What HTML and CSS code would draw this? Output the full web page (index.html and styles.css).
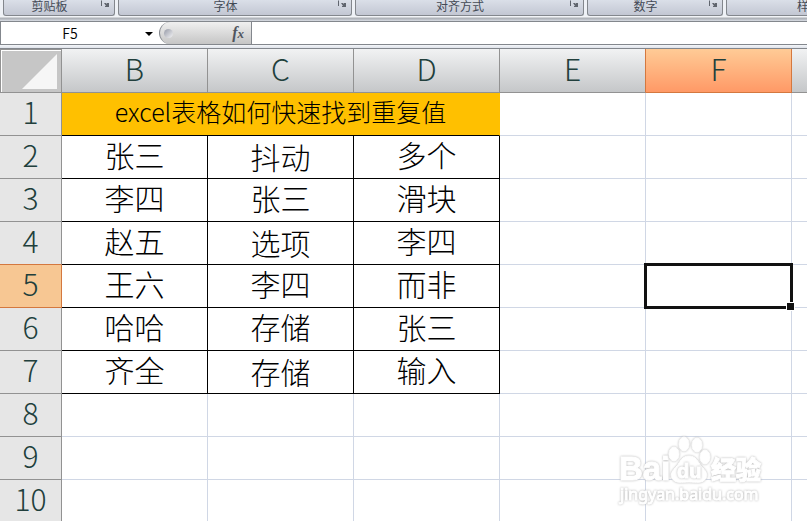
FILE: index.html
```html
<!DOCTYPE html>
<html lang="zh-CN">
<head>
    <meta charset="UTF-8">
    <meta name="viewport" content="width=device-width, initial-scale=1.0">
    <title>excel表格如何快速找到重复值</title>
    <link rel="stylesheet" href="styles.css">
</head>
<body>
    <div class="ribbon">
        <div class="group group-clipboard">
            <span>剪贴板</span>
            <button class="launcher" type="button" aria-label="剪贴板选项"><svg viewBox="0 0 9 8"><path d="M.5 6V.5" class="corner"/><path d="M3 3h2l1 1V3h2v4H4V6h1z" class="arrow"/></svg></button>
        </div>
        <div class="group group-font">
            <span>字体</span>
            <button class="launcher" type="button" aria-label="字体选项"><svg viewBox="0 0 9 8"><path d="M.5 6V.5" class="corner"/><path d="M3 3h2l1 1V3h2v4H4V6h1z" class="arrow"/></svg></button>
        </div>
        <div class="group group-align">
            <span>对齐方式</span>
            <button class="launcher" type="button" aria-label="对齐选项"><svg viewBox="0 0 9 8"><path d="M.5 6V.5" class="corner"/><path d="M3 3h2l1 1V3h2v4H4V6h1z" class="arrow"/></svg></button>
        </div>
        <div class="group group-number">
            <span>数字</span>
            <button class="launcher" type="button" aria-label="数字选项"><svg viewBox="0 0 9 8"><path d="M.5 6V.5" class="corner"/><path d="M3 3h2l1 1V3h2v4H4V6h1z" class="arrow"/></svg></button>
        </div>
        <div class="group group-style">
            <span>样式</span>
        </div>
    </div>

    <div class="formula-bar">
        <input class="name-box" type="text" value="F5" aria-label="名称框">
        <button class="name-arrow" type="button" aria-label="展开名称"><svg viewBox="0 0 8 4"><path d="M0 0h8L4 4z"/></svg></button>
        <div class="fx-area">
            <span class="knob"></span>
            <button class="fx" type="button" aria-label="插入函数"><i>f</i><i class="fx-x">x</i></button>
        </div>
        <input class="formula" type="text" aria-label="编辑栏">
    </div>

    <!-- 工作表 -->
    <table class="sheet">
        <colgroup>
            <col class="col-head">
            <col class="col-data"><col class="col-data"><col class="col-data"><col class="col-data"><col class="col-data">
            <col>
        </colgroup>
        <thead>
            <tr>
                <th class="select-all"><svg viewBox="0 0 35 35"><path d="M35 0v35H0z"/></svg></th>
                <th>B</th><th>C</th><th>D</th><th class="before-active">E</th><th class="active">F</th><th></th>
            </tr>
        </thead>
        <tbody>
            <tr><th>1</th><td colspan="3" class="title">excel表格如何快速找到重复值</td><td></td><td></td><td></td></tr>
            <tr class="filled"><th>2</th><td>张三</td><td class="low">抖动</td><td>多个</td><td></td><td></td><td></td></tr>
            <tr class="filled"><th>3</th><td>李四</td><td>张三</td><td>滑块</td><td></td><td></td><td></td></tr>
            <tr class="filled"><th class="before-active">4</th><td>赵五</td><td class="low">选项</td><td>李四</td><td></td><td></td><td></td></tr>
            <tr class="filled"><th class="active">5</th><td>王六</td><td>李四</td><td>而非</td><td></td><td class="selected"></td><td></td></tr>
            <tr class="filled"><th>6</th><td>哈哈</td><td>存储</td><td>张三</td><td></td><td></td><td></td></tr>
            <tr class="filled"><th>7</th><td>齐全</td><td class="low">存储</td><td>输入</td><td></td><td></td><td></td></tr>
            <tr><th>8</th><td></td><td></td><td></td><td></td><td></td><td></td></tr>
            <tr><th>9</th><td></td><td></td><td></td><td></td><td></td><td></td></tr>
            <tr><th>10</th><td></td><td></td><td></td><td></td><td></td><td></td></tr>
        </tbody>
    </table>

    <!-- 水印 -->
    <svg class="watermark" viewBox="0 0 150 75">
        <text x="2" y="48" class="wm-big">Bai</text>
        <g class="wm-paw">
            <ellipse cx="57" cy="22" rx="5" ry="7"/>
            <ellipse cx="67" cy="12" rx="5" ry="7"/>
            <ellipse cx="80" cy="13" rx="5" ry="7"/>
            <ellipse cx="88" cy="25" rx="5" ry="7"/>
            <path d="M72 24c-7 0-9 6-12 10-5 5-7 8-5 12 3 6 10 4 17 4s14 2 17-4c2-4 0-7-5-12-3-4-5-10-12-10z"/>
        </g>
        <text x="60" y="46" class="wm-du">du</text>
        <text x="94" y="47" class="wm-cn">经验</text>
        <text x="3" y="68" class="wm-url">jingyan.baidu.com</text>
    </svg>
</body>
</html>
```

FILE: styles.css
```css
/* 全局样式 */
* {
    box-sizing: border-box;
}

body {
    margin: 0;
    position: relative;
    min-height: 100vh;
    overflow: hidden;
    background: #fff;
    color: #000;
    font-family: "Noto Sans CJK SC", "Noto Sans", sans-serif;
}

button {
    border: 0;
    padding: 0;
    background: none;
}

svg {
    display: block;
}

/* 功能区 */
.ribbon {
    display: flex;
    gap: 3px;
    height: 21px;
    padding: 0 0 5px 3px;
    overflow: hidden;
    background: linear-gradient(#eef1f6 0, #eef1f6 16px, #f5f6f8 17px, #a9adb3 18px, #c4c8cf 20px, #dde1e8 21px);
}

.group {
    display: flex;
    align-items: flex-start;
    flex: none;
    height: 16px;
    border: 1px solid #83878d;
    border-top: 0;
    border-radius: 0 0 3px 3px;
    background: linear-gradient(#dadfe8, #c3c7d3);
    color: #444a55;
    font-size: 12px;
    line-height: 12px;
}

.group span {
    flex: 1;
    padding-right: 6px;
    text-align: center;
    white-space: nowrap;
}

.group-clipboard {
    width: 112px;
}

.group-font {
    width: 234px;
}

.group-align {
    width: 229px;
}

.group-number {
    width: 136px;
}

.group-style {
    flex: 1 0 172px;
}

.launcher {
    width: 9px;
    height: 8px;
    margin-right: 4px;
}

.launcher svg {
    width: 9px;
    height: 8px;
}

.corner {
    fill: none;
    stroke: #60656e;
}

.arrow {
    fill: #60656e;
}

/* 编辑栏 */
.formula-bar {
    display: flex;
    height: 28px;
    border-top: 1px solid #83878d;
    border-bottom: 1px solid #83878d;
    background: linear-gradient(#fff 0, #fff 22px, #83878d 22px, #83878d 23px, #f4f6f9 23px, #dfe3eb 26px);
}

.name-box {
    width: 139px;
    height: 22px;
    padding: 0;
    border: 0;
    border-left: 1px solid #83878d;
    outline: 0;
    background: transparent;
    font-family: inherit;
    font-size: 14px;
    font-weight: 350;
    text-align: center;
}

.name-arrow {
    width: 20px;
    height: 22px;
}

.name-arrow svg {
    width: 8px;
    height: 4px;
    margin: 2px 6px 0 auto;
}

.fx-area {
    display: flex;
    align-items: center;
    justify-content: space-between;
    width: 93px;
    height: 22px;
    padding: 0 7px 0 4px;
    border: 1px solid #83878d;
    border-width: 0 1px;
    border-radius: 11px 0 0 11px;
    background: linear-gradient(#f0f0f0, #c5c5c5);
}

.knob {
    width: 9px;
    height: 9px;
    border-radius: 50%;
    background: linear-gradient(135deg, #9599a6, #f4f4f6);
}

.fx {
    color: #50555e;
    font-family: "Liberation Serif", serif;
    font-size: 16px;
    font-weight: bold;
    line-height: 20px;
}

.fx-x {
    font-size: 13px;
}

.formula {
    flex: 1;
    height: 22px;
    min-width: 0;
    border: 0;
    outline: 0;
    background: transparent;
}

/* 工作表 */
.sheet {
    width: 100%;
    table-layout: fixed;
    border-collapse: separate;
    border-spacing: 0;
}

.col-head {
    width: 62px;
}

.col-data {
    width: 146px;
}

.sheet th,
.sheet td {
    height: 43px;
    padding: 0 0 6px;
    border: 0 solid #d0d7e5;
    border-width: 0 1px 1px 0;
    font-size: 30px;
    font-weight: 300;
    line-height: 36px;
    text-align: center;
    white-space: nowrap;
}

.sheet tr > :last-child {
    border-right: 0;
}

.sheet th {
    border-color: #929292;
    background: #e6e6e6;
    color: #213f3c;
}

.sheet thead th {
    height: 44px;
    background: linear-gradient(#f1f2f3, #c5c7c9);
}

.sheet thead .select-all {
    padding: 4px 4px 3px 22px;
    border-color: #929292;
    box-shadow: inset 1px 1px #929292, inset 2px 2px #fff;
    background: #c6c6c6;
}

.select-all svg {
    width: 35px;
    height: 35px;
    fill: #f6f6f6;
}

.sheet thead .before-active {
    border-right-color: #d4783f;
}

.sheet tbody .before-active {
    border-bottom-color: #d4783f;
}

.sheet thead .active {
    border-color: #d4783f;
    background: linear-gradient(#ffcb96, #ff9966);
}

.sheet tbody .active {
    border-color: #d4783f;
    background: #f7c793;
}

.sheet .title {
    border-color: #ffc000 #ffc000 #000;
    background: #ffc000;
    font-size: 25px;
}

.filled td:nth-child(-n+4) {
    border-color: #000;
}

.sheet .low {
    padding-bottom: 2px;
}

/* 选中的单元格 */
.selected {
    position: relative;
}

.selected::before {
    content: "";
    position: absolute;
    inset: -2px;
    border: 3px solid #111;
}

.selected::after {
    content: "";
    position: absolute;
    right: -4px;
    bottom: -4px;
    width: 7px;
    height: 7px;
    border: 1px solid #fff;
    background: #111;
}

/* 水印 */
.watermark {
    position: absolute;
    right: 40px;
    bottom: 16px;
    width: 150px;
    height: 75px;
    overflow: visible;
    fill: #fff;
    stroke: #fff;
    stroke-width: 1;
    font-family: "Liberation Sans", sans-serif;
}

.watermark text,
.wm-paw {
    filter: drop-shadow(0 0 1px #b4b4b4);
}

.wm-big {
    font-size: 33px;
    font-weight: bold;
}

.wm-du {
    font-size: 20px;
    font-weight: bold;
}

.wm-cn {
    font-family: "Noto Sans CJK SC", sans-serif;
    font-size: 25px;
    font-weight: 900;
}

.wm-url {
    font-family: "Noto Sans", sans-serif;
    font-size: 16px;
}
```
